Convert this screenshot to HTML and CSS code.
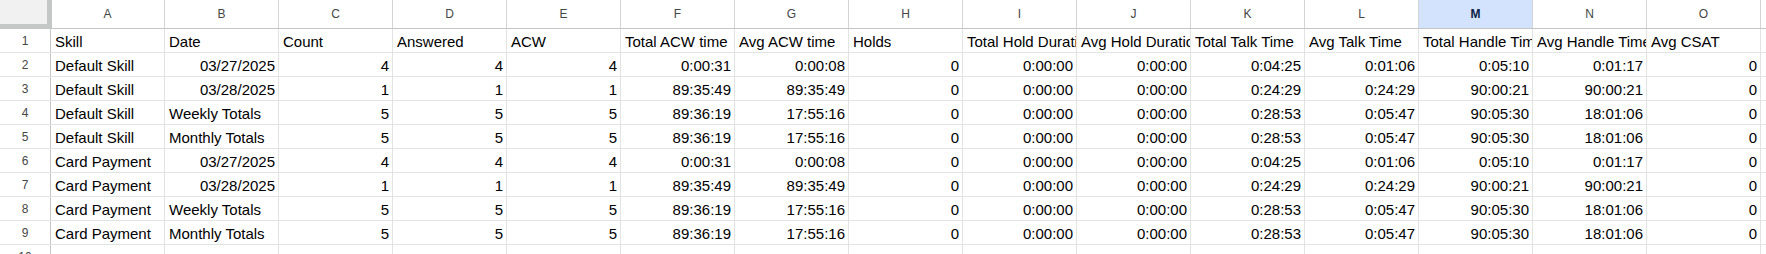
FILE: index.html
```html
<!DOCTYPE html>
<html>
<head>
<meta charset="utf-8">
<title>Skill report</title>
<link rel="stylesheet" href="styles.css">
</head>
<body>
<div class="sheet">
  <div class="row head">
    <div class="corner"></div>
    <div class="col">A</div><div class="col">B</div><div class="col">C</div><div class="col">D</div><div class="col">E</div>
    <div class="col">F</div><div class="col">G</div><div class="col">H</div><div class="col">I</div><div class="col">J</div>
    <div class="col">K</div><div class="col">L</div><div class="col sel">M</div><div class="col">N</div><div class="col">O</div>
    <div class="col fill"></div>
  </div>

  <div class="row">
    <div class="num">1</div>
    <div class="cell">Skill</div><div class="cell">Date</div><div class="cell">Count</div><div class="cell">Answered</div><div class="cell">ACW</div>
    <div class="cell">Total ACW time</div><div class="cell">Avg ACW time</div><div class="cell">Holds</div><div class="cell">Total Hold Duration</div><div class="cell">Avg Hold Duration</div>
    <div class="cell">Total Talk Time</div><div class="cell">Avg Talk Time</div><div class="cell">Total Handle Time</div><div class="cell">Avg Handle Time</div><div class="cell">Avg CSAT</div>
    <div class="cell fill"></div>
  </div>

  <div class="row">
    <div class="num">2</div>
    <div class="cell">Default Skill</div><div class="cell r">03/27/2025</div><div class="cell r">4</div><div class="cell r">4</div><div class="cell r">4</div>
    <div class="cell r">0:00:31</div><div class="cell r">0:00:08</div><div class="cell r">0</div><div class="cell r">0:00:00</div><div class="cell r">0:00:00</div>
    <div class="cell r">0:04:25</div><div class="cell r">0:01:06</div><div class="cell r">0:05:10</div><div class="cell r">0:01:17</div><div class="cell r">0</div>
    <div class="cell fill"></div>
  </div>

  <div class="row">
    <div class="num">3</div>
    <div class="cell">Default Skill</div><div class="cell r">03/28/2025</div><div class="cell r">1</div><div class="cell r">1</div><div class="cell r">1</div>
    <div class="cell r">89:35:49</div><div class="cell r">89:35:49</div><div class="cell r">0</div><div class="cell r">0:00:00</div><div class="cell r">0:00:00</div>
    <div class="cell r">0:24:29</div><div class="cell r">0:24:29</div><div class="cell r">90:00:21</div><div class="cell r">90:00:21</div><div class="cell r">0</div>
    <div class="cell fill"></div>
  </div>

  <div class="row">
    <div class="num">4</div>
    <div class="cell">Default Skill</div><div class="cell">Weekly Totals</div><div class="cell r">5</div><div class="cell r">5</div><div class="cell r">5</div>
    <div class="cell r">89:36:19</div><div class="cell r">17:55:16</div><div class="cell r">0</div><div class="cell r">0:00:00</div><div class="cell r">0:00:00</div>
    <div class="cell r">0:28:53</div><div class="cell r">0:05:47</div><div class="cell r">90:05:30</div><div class="cell r">18:01:06</div><div class="cell r">0</div>
    <div class="cell fill"></div>
  </div>

  <div class="row">
    <div class="num">5</div>
    <div class="cell">Default Skill</div><div class="cell">Monthly Totals</div><div class="cell r">5</div><div class="cell r">5</div><div class="cell r">5</div>
    <div class="cell r">89:36:19</div><div class="cell r">17:55:16</div><div class="cell r">0</div><div class="cell r">0:00:00</div><div class="cell r">0:00:00</div>
    <div class="cell r">0:28:53</div><div class="cell r">0:05:47</div><div class="cell r">90:05:30</div><div class="cell r">18:01:06</div><div class="cell r">0</div>
    <div class="cell fill"></div>
  </div>

  <div class="row">
    <div class="num">6</div>
    <div class="cell">Card Payment</div><div class="cell r">03/27/2025</div><div class="cell r">4</div><div class="cell r">4</div><div class="cell r">4</div>
    <div class="cell r">0:00:31</div><div class="cell r">0:00:08</div><div class="cell r">0</div><div class="cell r">0:00:00</div><div class="cell r">0:00:00</div>
    <div class="cell r">0:04:25</div><div class="cell r">0:01:06</div><div class="cell r">0:05:10</div><div class="cell r">0:01:17</div><div class="cell r">0</div>
    <div class="cell fill"></div>
  </div>

  <div class="row">
    <div class="num">7</div>
    <div class="cell">Card Payment</div><div class="cell r">03/28/2025</div><div class="cell r">1</div><div class="cell r">1</div><div class="cell r">1</div>
    <div class="cell r">89:35:49</div><div class="cell r">89:35:49</div><div class="cell r">0</div><div class="cell r">0:00:00</div><div class="cell r">0:00:00</div>
    <div class="cell r">0:24:29</div><div class="cell r">0:24:29</div><div class="cell r">90:00:21</div><div class="cell r">90:00:21</div><div class="cell r">0</div>
    <div class="cell fill"></div>
  </div>

  <div class="row">
    <div class="num">8</div>
    <div class="cell">Card Payment</div><div class="cell">Weekly Totals</div><div class="cell r">5</div><div class="cell r">5</div><div class="cell r">5</div>
    <div class="cell r">89:36:19</div><div class="cell r">17:55:16</div><div class="cell r">0</div><div class="cell r">0:00:00</div><div class="cell r">0:00:00</div>
    <div class="cell r">0:28:53</div><div class="cell r">0:05:47</div><div class="cell r">90:05:30</div><div class="cell r">18:01:06</div><div class="cell r">0</div>
    <div class="cell fill"></div>
  </div>

  <div class="row">
    <div class="num">9</div>
    <div class="cell">Card Payment</div><div class="cell">Monthly Totals</div><div class="cell r">5</div><div class="cell r">5</div><div class="cell r">5</div>
    <div class="cell r">89:36:19</div><div class="cell r">17:55:16</div><div class="cell r">0</div><div class="cell r">0:00:00</div><div class="cell r">0:00:00</div>
    <div class="cell r">0:28:53</div><div class="cell r">0:05:47</div><div class="cell r">90:05:30</div><div class="cell r">18:01:06</div><div class="cell r">0</div>
    <div class="cell fill"></div>
  </div>

  <div class="row">
    <div class="num">10</div>
    <div class="cell"></div><div class="cell"></div><div class="cell"></div><div class="cell"></div><div class="cell"></div>
    <div class="cell"></div><div class="cell"></div><div class="cell"></div><div class="cell"></div><div class="cell"></div>
    <div class="cell"></div><div class="cell"></div><div class="cell"></div><div class="cell"></div><div class="cell"></div>
    <div class="cell fill"></div>
  </div>
</div>
</body>
</html>
```

FILE: styles.css
```css
html, body {
  margin: 0;
  background: #fff;
  overflow: hidden;
}

body {
  width: 1766px;
  height: 254px;
  font-family: "Liberation Sans", Arial, sans-serif;
  color: #000;
}

.sheet {
  display: flex;
  flex-direction: column;
}

.row {
  display: flex;
  height: 24px;
  flex: none;
  box-sizing: border-box;
  border-bottom: 1px solid #e2e3e3;
}

/* column letters */
.row.head {
  height: 29px;
  border-bottom: 1px solid #c4c7c5;
}

.corner {
  width: 51px;
  flex: none;
  box-sizing: border-box;
  background: #f1f1f1;
  border-right: 4px solid #c4c7c5;
  border-bottom: 4px solid #c4c7c5;
  box-shadow: 1px 0 0 #c4c7c5;
}

.col {
  width: 114px;
  flex: none;
  box-sizing: border-box;
  border-right: 1px solid #d3d5d6;
  text-align: center;
  font-size: 12px;
  line-height: 28px;
  color: #444746;
}

.col.sel {
  background: #d3e3fd;
  color: #0b1f44;
  font-weight: bold;
}

/* row numbers */
.num {
  width: 51px;
  flex: none;
  box-sizing: border-box;
  border-right: 1px solid #c4c7c5;
  text-align: center;
  font-size: 12px;
  line-height: 22px;
  padding-top: 1px;
  color: #444746;
  overflow: hidden;
}

.cell {
  width: 114px;
  flex: none;
  box-sizing: border-box;
  border-right: 1px solid #e2e3e3;
  padding: 2px 3px 0 4px;
  font-size: 15px;
  line-height: 21px;
  white-space: nowrap;
  overflow: hidden;
}

.cell.r {
  text-align: right;
}

.fill {
  flex: 1;
  border-right: none;
}
```
